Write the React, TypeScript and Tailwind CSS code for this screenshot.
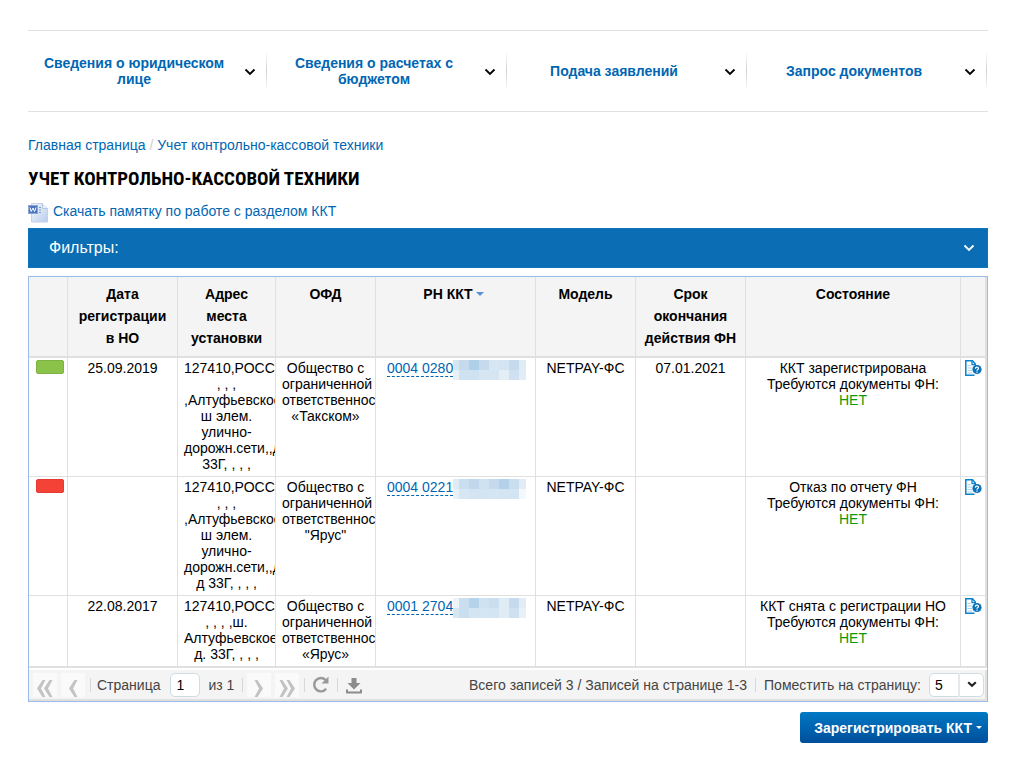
import { useState } from 'react';
import clsx from 'clsx';

type Row = {
    mark: 'green' | 'red' | null;
    date: string;
    address: string;
    ofd: string;
    number: string;
    mask: string[][];
    model: string;
    expires: string;
    status: string;
};

const NAV = [
    'Сведения о юридическом лице',
    'Сведения о расчетах с бюджетом',
    'Подача заявлений',
    'Запрос документов',
];

const ROWS: Row[] = [
    {
        mark: 'green',
        date: '25.09.2019',
        address: '127410,РОССИЯ\n, , ,\n,Алтуфьевское\nш элем.\nулично-\nдорожн.сети,,д\n33Г, , , ,',
        ofd: 'Общество с\nограниченной\nответственностью\n«Такском»',
        number: '0004 0280',
        mask: [
            ['#d5e5f1', '#c5daec', '#b0cfe8', '#c5daec', '#d7e6f3', '#d3e4f2', '#c5daec', '#dfebf5'],
            ['#e9f1f8', '#cfe2f1', '#cfe2f1', '#d5e5f1', '#d5e5f1', '#e3eef7', '#cfe0f0', '#e1ecf6'],
        ],
        model: 'NETPAY-ФС',
        expires: '07.01.2021',
        status: 'ККТ зарегистрирована',
    },
    {
        mark: 'red',
        date: '',
        address: '127410,РОССИЯ\n, , ,\n,Алтуфьевское\nш элем.\nулично-\nдорожн.сети,,д\nд 33Г, , , ,',
        ofd: 'Общество с\nограниченной\nответственностью\n"Ярус"',
        number: '0004 0221',
        mask: [
            ['#dfebf5', '#c9deef', '#c1d8ec', '#cfe2f1', '#c5daec', '#b3d1e9', '#c9deef', '#e1ecf6'],
            ['#e9f1f8', '#d7e6f3', '#d3e4f2', '#d3e4f2', '#d5e5f1', '#d3e4f2', '#d3e4f2', '#f3f8fc'],
        ],
        model: 'NETPAY-ФС',
        expires: '',
        status: 'Отказ по отчету ФН',
    },
    {
        mark: null,
        date: '22.08.2017',
        address: '127410,РОССИЯ\n, , , ,ш.\nАлтуфьевское\nд. 33Г, , , ,',
        ofd: 'Общество с\nограниченной\nответственностью\n«Ярус»',
        number: '0001 2704',
        mask: [
            ['#edf4fa', '#c9deef', '#b5d3ea', '#cfe2f1', '#c9deef', '#dfebf5', '#c5daec', '#e1ecf6'],
            ['#d7e6f3', '#c9deef', '#d3e4f2', '#d5e5f1', '#d3e4f2', '#dfebf5', '#cfe0f0', '#e9f1f8'],
        ],
        model: 'NETPAY-ФС',
        expires: '',
        status: 'ККТ снята с регистрации НО',
    },
];

function Chevron() {
    return (
        <svg width="12" height="8" viewBox="0 0 12 8" fill="none" stroke="currentColor" strokeWidth="1.8" aria-hidden="true">
            <path d="M1.5 1.5 6 6l4.5-4.5" />
        </svg>
    );
}

function WordIcon() {
    return (
        <svg width="20" height="20" viewBox="0 0 20 20" className="shrink-0" aria-hidden="true">
            <defs>
                <linearGradient id="page-fill" x1="0" y1="0" x2="1" y2="1">
                    <stop offset="0" stopColor="#f4f8fd" />
                    <stop offset="1" stopColor="#b9cdec" />
                </linearGradient>
            </defs>
            <path d="M3.5.5h11l5 5v13.5h-16z" fill="url(#page-fill)" stroke="#c3d1e8" />
            <path d="M14.5.5v5h5" fill="#e9f1fb" stroke="#b4c6e2" />
            <path d="M11 4.500h2M11 7h2M11 9.500h2" stroke="#7d9fd0" />
            <rect x=".5" y="2.500" width="9" height="8" fill="#4a73c0" stroke="#89a5da" />
            <path d="m2 4.500 1.200 4L5 5l1.500 3.500 1.500-4" fill="none" stroke="#fff" />
        </svg>
    );
}

function DocQuestionIcon() {
    return (
        <svg width="17" height="17" viewBox="0 0 17 17" fill="none" aria-hidden="true">
            <path d="M9.500 15.300H.8V.8h6.700L10.300 4v2" stroke="#0b82cc" strokeWidth="1.500" />
            <path d="M7 1v3.700h3.500" stroke="#0b82cc" strokeWidth="1.300" />
            <path d="M2.500 5.500h3M2.500 8h5M2.500 10.500h4.500M2.500 13h5" stroke="#a9cfe9" />
            <circle cx="12" cy="9.500" r="4.600" fill="#0b72ba" />
            <path d="M10.400 8.700c0-2.100 3.100-2 3.100-.2 0 1.100-1.500 1.100-1.500 2.200M12 11.400v1.300" stroke="#fff" strokeWidth="1.200" />
        </svg>
    );
}

// Pixelated cover over the hidden part of a registration number
function Mask({ cells }: { cells: string[][] }) {
    return (
        <svg width="73" height="20" viewBox="7 0 73 20" shapeRendering="crispEdges" aria-hidden="true">
            {cells.map((line, y) =>
                line.map((fill, x) => <rect key={`${x}-${y}`} x={x * 10 + 3} y={y * 10} width="10" height="10" fill={fill} />)
            )}
        </svg>
    );
}

function PagerArrow({ label, double, flip }: { label: string; double?: boolean; flip?: boolean }) {
    return (
        <button aria-label={label} className="flex h-6 w-6 items-end justify-center bg-[#fafafa] text-[#c3c3c3]">
            <svg width="18" height="17" viewBox="0 0 18 17" fill="currentColor" className={clsx(flip && 'rotate-180')} aria-hidden="true">
                {double ? (
                    <path d="M6.500 0h3L5 8.500 9.500 17h-3L1 8.500zM13.500 0h3L12 8.500l4.500 8.500h-3L8 8.500z" />
                ) : (
                    <path d="M10.500 0h3L9 8.500l4.500 8.500h-3L5 8.500z" />
                )}
            </svg>
        </button>
    );
}

function Divider() {
    return <span className="h-[14px] w-px bg-[#d8d8d8]" />;
}

const TH = 'border-r border-b-2 border-[#e0e0e0] px-1 pt-[6px] pb-[7px] align-top font-bold leading-[22px]';
const TD = 'overflow-hidden border-r border-b border-[#e0e0e0] px-[6px] pt-[2px] pb-1 align-top';

export default function App() {
    const [page, setPage] = useState('1');
    const [perPage, setPerPage] = useState('5');

    return (
        <div className="bg-white pt-[30px] pr-[26px] pb-[23px] pl-7 font-['Liberation_Sans',Arial,sans-serif] text-sm leading-4 text-black">
            <nav className="grid grid-cols-4 border-y border-[#e0e0e0]">
                {NAV.map((item) => (
                    <div key={item} className="flex h-20 items-center">
                        <a href="#" className="flex-1 pr-[10px] pl-3 text-center font-bold text-[#0066b3]">
                            {item}
                        </a>
                        <button aria-label={`Открыть меню: ${item}`} className="flex w-7 justify-center pt-[2px] pr-1">
                            <Chevron />
                        </button>
                        <span className="mr-px h-10 w-px bg-gradient-to-b from-white via-[#d0d0d0] to-white" />
                    </div>
                ))}
            </nav>

            <div className="mt-[25px] text-[#0066b3]">
                <a href="#">Главная страница</a>
                <span className="text-[#ccc]"> / </span>
                <a href="#">Учет контрольно-кассовой техники</a>
            </div>

            <h1 className="mt-3 font-['Roboto_Condensed','Liberation_Sans_Narrow','Liberation_Sans',sans-serif] text-[19px] leading-7 font-bold uppercase">
                Учет контрольно-кассовой техники
            </h1>

            <a href="#" className="mt-[10px] flex h-5 gap-[5px] text-[#0066b3]">
                <WordIcon />
                <span>Скачать памятку по работе с разделом ККТ</span>
            </a>

            <button className="mt-[5px] flex h-10 w-full items-center justify-between border border-[#0b76bd] bg-[#0b6db3] pr-3 pl-5 text-base text-white">
                <span>Фильтры:</span>
                <Chevron />
            </button>

            <div className="mt-2 border border-[#99bce8]">
                <table className="w-full table-fixed border-separate border-spacing-0 text-center">
                    <colgroup>
                        <col className="w-[39px]" />
                        <col className="w-[110px]" />
                        <col className="w-[98px]" />
                        <col className="w-[100px]" />
                        <col className="w-[160px]" />
                        <col className="w-[100px]" />
                        <col className="w-[110px]" />
                        <col />
                        <col className="w-[26px]" />
                    </colgroup>
                    <thead className="bg-[#f4f4f4]">
                        <tr>
                            <th className={TH} />
                            <th className={TH}>Дата<br />регистрации<br />в НО</th>
                            <th className={TH}>Адрес<br />места<br />установки</th>
                            <th className={TH}>ОФД</th>
                            <th className={TH}>
                                <button className="inline-flex items-center gap-[3px] pr-1 font-bold">
                                    РН ККТ
                                    <svg width="8" height="4" viewBox="0 0 8 4" fill="#5b8fd6" aria-hidden="true">
                                        <path d="M0 0h8L4 4z" />
                                    </svg>
                                </button>
                            </th>
                            <th className={TH}>Модель</th>
                            <th className={TH}>Срок<br />окончания<br />действия ФН</th>
                            <th className={TH}>Состояние</th>
                            <th className={clsx(TH, 'border-r-2')} />
                        </tr>
                    </thead>
                    <tbody>
                        {ROWS.map((row, i) => {
                            const td = clsx(TD, i === ROWS.length - 1 && 'border-b-2');
                            return (
                                <tr key={row.number}>
                                    <td className={td}>
                                        {row.mark && (
                                            <div
                                                className={clsx(
                                                    'ml-px h-[14px] w-7 rounded-xs border',
                                                    row.mark === 'green' ? 'border-[#7cb342] bg-[#8bc34a]' : 'border-[#e53935] bg-[#f44336]'
                                                )}
                                            />
                                        )}
                                    </td>
                                    <td className={td}>{row.date}</td>
                                    <td className={clsx(td, 'whitespace-pre')}>{row.address}</td>
                                    <td className={clsx(td, 'whitespace-pre')}>{row.ofd}</td>
                                    <td className={td}>
                                        <div className="flex h-5 items-start pl-[5px]">
                                            <a href="#" className="border-b border-dashed border-[#0066b3] whitespace-nowrap text-[#0066b3]">
                                                {row.number}
                                            </a>
                                            <Mask cells={row.mask} />
                                        </div>
                                    </td>
                                    <td className={td}>{row.model}</td>
                                    <td className={td}>{row.expires}</td>
                                    <td className={td}>
                                        {row.status}
                                        <br />
                                        Требуются документы ФН:
                                        <br />
                                        <span className="text-[#0a9a0a]">НЕТ</span>
                                    </td>
                                    <td className={clsx(td, 'border-r-2 pr-0 pl-1')}>
                                        <button aria-label="История документов" className="block">
                                            <DocQuestionIcon />
                                        </button>
                                    </td>
                                </tr>
                            );
                        })}
                    </tbody>
                </table>

                <div className="mt-[2px] flex h-[31px] items-center border-r-2 border-b-2 border-[#e0e0e0] bg-[#f4f4f4] pl-1 text-[#444]">
                    <div className="flex items-center">
                        <PagerArrow label="Первая страница" double />
                        <span className="w-1" />
                        <PagerArrow label="Предыдущая страница" />
                        <span className="w-[5px]" />
                        <Divider />
                        <label htmlFor="page" className="ml-[6px]">Страница</label>
                        <input
                            id="page"
                            value={page}
                            onChange={(e) => setPage(e.target.value)}
                            className="mr-2 ml-[10px] h-6 w-[30px] rounded-[5px] border border-[#cddde3] bg-white pl-[5px] text-black"
                        />
                        <span>из 1</span>
                        <span className="w-2" />
                        <Divider />
                        <span className="w-1" />
                        <PagerArrow label="Следующая страница" flip />
                        <span className="w-1" />
                        <PagerArrow label="Последняя страница" double flip />
                        <span className="w-[5px]" />
                        <Divider />
                        <button aria-label="Обновить" className="mx-[7px] text-[#999]">
                            <svg width="18" height="18" viewBox="0 0 18 18" fill="none" aria-hidden="true">
                                <path d="M14.200 12.800A6.700 6.700 0 1 1 13.700 4" stroke="currentColor" strokeWidth="2.400" />
                                <path d="M16.500.5v7h-7z" fill="currentColor" />
                            </svg>
                        </button>
                        <Divider />
                        <button aria-label="Скачать" className="ml-2 pt-[3px] text-[#8c8c8c]">
                            <svg width="16" height="16" viewBox="0 0 16 16" aria-hidden="true">
                                <path d="M5.500 0h5v5h4L8 11.500 1.500 5h4z" fill="currentColor" />
                                <path d="M1 11.500v3h14v-3" fill="none" stroke="currentColor" strokeWidth="2" strokeLinejoin="round" />
                            </svg>
                        </button>
                    </div>

                    <div className="ml-auto flex items-center whitespace-nowrap">
                        <span>Всего записей 3 / Записей на странице 1-3</span>
                        <span className="w-2" />
                        <Divider />
                        <label htmlFor="per-page" className="mr-2 ml-2">Поместить на страницу:</label>
                        <div className="relative mr-px">
                            <select
                                id="per-page"
                                value={perPage}
                                onChange={(e) => setPerPage(e.target.value)}
                                className="block h-6 w-[55px] appearance-none rounded-[5px] border border-[#cddde3] bg-white pl-[5px] text-black"
                            >
                                <option>5</option>
                                <option>10</option>
                                <option>20</option>
                            </select>
                            <span className="pointer-events-none absolute top-0 right-0 flex h-6 w-[26px] items-center justify-center border-l-2 border-[#e3e9ec] text-[#222]">
                                <svg width="10" height="7" viewBox="0 0 10 7" fill="none" stroke="currentColor" strokeWidth="2.200" aria-hidden="true">
                                    <path d="M1.200 1.200 5 4.800l3.800-3.600" />
                                </svg>
                            </span>
                        </div>
                    </div>
                </div>
            </div>

            <div className="mt-[10px] flex justify-end">
                <button className="flex h-[31px] items-center gap-1 rounded-[3px] bg-gradient-to-b from-[#0079c4] to-[#004f9b] pr-[6px] pl-[14px] font-bold text-white">
                    Зарегистрировать ККТ
                    <svg width="6" height="3" viewBox="0 0 6 3" fill="currentColor" aria-hidden="true">
                        <path d="M0 0h6L3 3z" />
                    </svg>
                </button>
            </div>
        </div>
    );
}
